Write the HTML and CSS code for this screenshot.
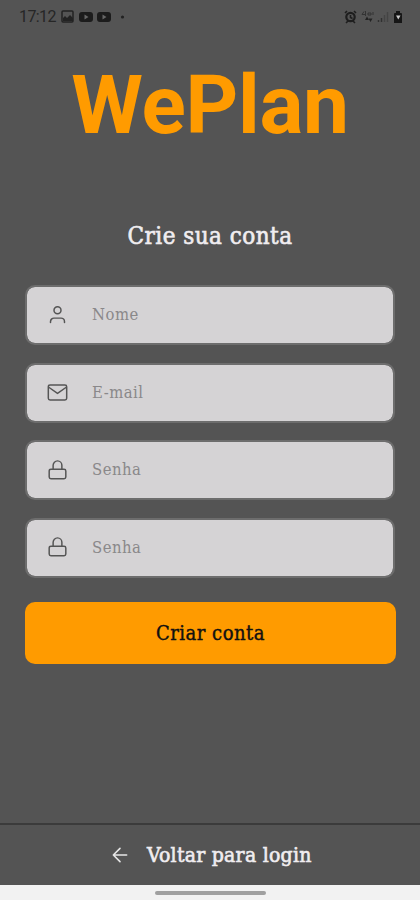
FILE: index.html
```
<!DOCTYPE html>
<html lang="pt-BR">
<head>
<meta charset="utf-8">
<title>WePlan</title>
<link rel="stylesheet" href="styles.css">
</head>
<body>
<div class="screen">
  <header class="status">
    <span class="time">17:12</span>
    <svg class="notifications" width="66" height="14" viewBox="0 0 66 14">
      <rect x="1" y="1" width="11" height="11" rx="1" fill="none" stroke="#222" stroke-width="1.5"/>
      <path d="M2 11V8l2-2 2 2 3-3 3 3v3z" fill="#222"/>
      <rect x="18" y="2" width="14" height="10" rx="3" fill="#1c1c1c"/>
      <path d="M23.5 4.500l4 2.500-4 2.500z" fill="#666"/>
      <rect x="36" y="2" width="14" height="10" rx="3" fill="#1c1c1c"/>
      <path d="M41.500 4.500l4 2.500-4 2.500z" fill="#666"/>
      <circle cx="61.500" cy="7" r="1.600" fill="#222"/>
    </svg>
    <svg class="indicators" width="62" height="14" viewBox="0 0 62 14">
      <circle cx="7.500" cy="7" r="4.200" fill="none" stroke="#1e1e1e" stroke-width="2.200"/>
      <path d="M2 3l2-2M11 1l2 2M3 13l2-2M12 13l-2-2M7.500 5v2.500l2 1" fill="none" stroke="#1e1e1e" stroke-width="1.600"/>
      <path d="M21 1.500l-2 3h4M22.500 1v5M25 3h3v2h-3zM30 2v3" fill="none" stroke="#333" stroke-width="1"/>
      <path d="M22 10l2-3.500 2 3.500zM25.500 8.500l2 3.500 2-3.500z" fill="#222"/>
      <path d="M35.500 12v-2M38.500 12V8" stroke="#303030" stroke-width="1.500"/>
      <path d="M41.500 12V5M44.500 12V2" stroke="#444" stroke-width="1.500"/>
      <path d="M51 4q0-1 1-1h1V1h4v2h1q1 0 1 1v9h-8z" fill="#161616"/>
      <path d="M53 5.500h4.500l-2.200 4z" fill="#ccc"/>
    </svg>
  </header>
  <main class="content">
    <h1 class="logo">WePlan</h1>
    <h2 class="title">Crie sua conta</h2>
    <form class="form">
      <label class="field">
        <svg class="icon" viewBox="0 0 24 24"><path d="M20 20v-1a4 4 0 0 0-4-4H8a4 4 0 0 0-4 4v1"/><circle cx="12" cy="6" r="4"/></svg>
        <span class="placeholder">Nome</span>
      </label>
      <label class="field">
        <svg class="icon" viewBox="0 0 24 24"><rect x="1.500" y="3.500" width="21" height="17" rx="2"/><path d="M22 6l-10 7L2 6"/></svg>
        <span class="placeholder">E-mail</span>
      </label>
      <label class="field">
        <svg class="icon" viewBox="0 0 24 24"><rect x="2.500" y="10.500" width="19" height="11" rx="2"/><path d="M7 10.500V6a5 5 0 0 1 10 0v4.500"/></svg>
        <span class="placeholder">Senha</span>
      </label>
      <label class="field">
        <svg class="icon" viewBox="0 0 24 24"><rect x="2.500" y="10.500" width="19" height="11" rx="2"/><path d="M7 10.500V6a5 5 0 0 1 10 0v4.500"/></svg>
        <span class="placeholder">Senha</span>
      </label>
      <button class="submit" type="button">Criar conta</button>
    </form>
  </main>
  <footer class="back">
    <svg class="arrow" viewBox="0 0 24 24"><path d="M20 12H4M12 4l-8 8 8 8"/></svg>
    <span class="back-text">Voltar para login</span>
  </footer>
  <div class="navbar"><div class="handle"></div></div>
</div>
</body>
</html>
```
FILE: styles.css
```
* { box-sizing: border-box; }
body { margin: 0; }
.screen {
  width: 420px;
  height: 900px;
  display: flex;
  flex-direction: column;
  background: #545454;
  font-family: "Roboto Slab", "DejaVu Serif Condensed", "DejaVu Serif", serif;
  overflow: hidden;
}
.status {
  height: 33px;
  display: flex;
  align-items: center;
  padding: 0 15px 0 19px;
}
.time {
  width: 42px;
  font: 400 16px/20px Roboto, sans-serif;
  letter-spacing: -0.6px;
  color: #262626;
}
.indicators { margin-left: auto; }
.content {
  flex: 1;
  display: flex;
  flex-direction: column;
  align-items: center;
}
.logo {
  margin: 23px 0 0;
  font: 700 82px/98px Roboto, sans-serif;
  letter-spacing: -0.3px;
  color: #ff9b00;
  white-space: nowrap;
}
.title {
  margin: 65px 0 0;
  height: 34px;
  font-size: 24px;
  line-height: 34px;
  font-weight: 400;
  letter-spacing: 0.45px;
  color: #f0edf0;
  -webkit-text-stroke: 0.6px #f0edf0;
  white-space: nowrap;
}
.form {
  width: 372px;
  margin-top: 32px;
  display: flex;
  flex-direction: column;
  align-items: center;
  gap: 17.6px;
}
.field {
  width: 370px;
  height: 60px;
  display: flex;
  align-items: center;
  padding-left: 20px;
  border: 2px solid #6d6d6d;
  border-radius: 10px;
  background: #d5d3d5;
  background-clip: padding-box;
}
.icon {
  width: 21px;
  height: 21px;
  margin-right: 24px;
  fill: none;
  stroke: #555;
  stroke-width: 1.7;
  stroke-linecap: round;
  stroke-linejoin: round;
}
.placeholder {
  font-size: 16.5px;
  line-height: 20px;
  letter-spacing: 0.5px;
  color: #8a888a;
  white-space: nowrap;
}
.submit {
  width: 371px;
  height: 62px;
  margin: 7px 0 0 1px;
  padding: 0;
  border: 0;
  border-radius: 10px;
  background: #ff9b00;
  font-family: inherit;
  font-size: 20px;
  letter-spacing: 0.5px;
  color: #111;
  -webkit-text-stroke: 0.4px #111;
}
.back {
  height: 62px;
  display: flex;
  align-items: center;
  padding-left: 110px;
  border-top: 2px solid #3b3b3b;
}
.arrow {
  width: 20px;
  height: 20px;
  margin-right: 17px;
  fill: none;
  stroke: #e6e6e6;
  stroke-width: 1.900;
  stroke-linecap: round;
  stroke-linejoin: round;
}
.back-text {
  font-size: 21px;
  letter-spacing: 0.25px;
  color: #f0edf0;
  -webkit-text-stroke: 0.6px #f0edf0;
  white-space: nowrap;
}
.navbar {
  height: 15px;
  padding-top: 6px;
  background: #f2f2f2;
}
.handle {
  width: 111px;
  height: 4px;
  margin: 0 auto;
  border-radius: 2px;
  background: #a0a0a0;
}
```
